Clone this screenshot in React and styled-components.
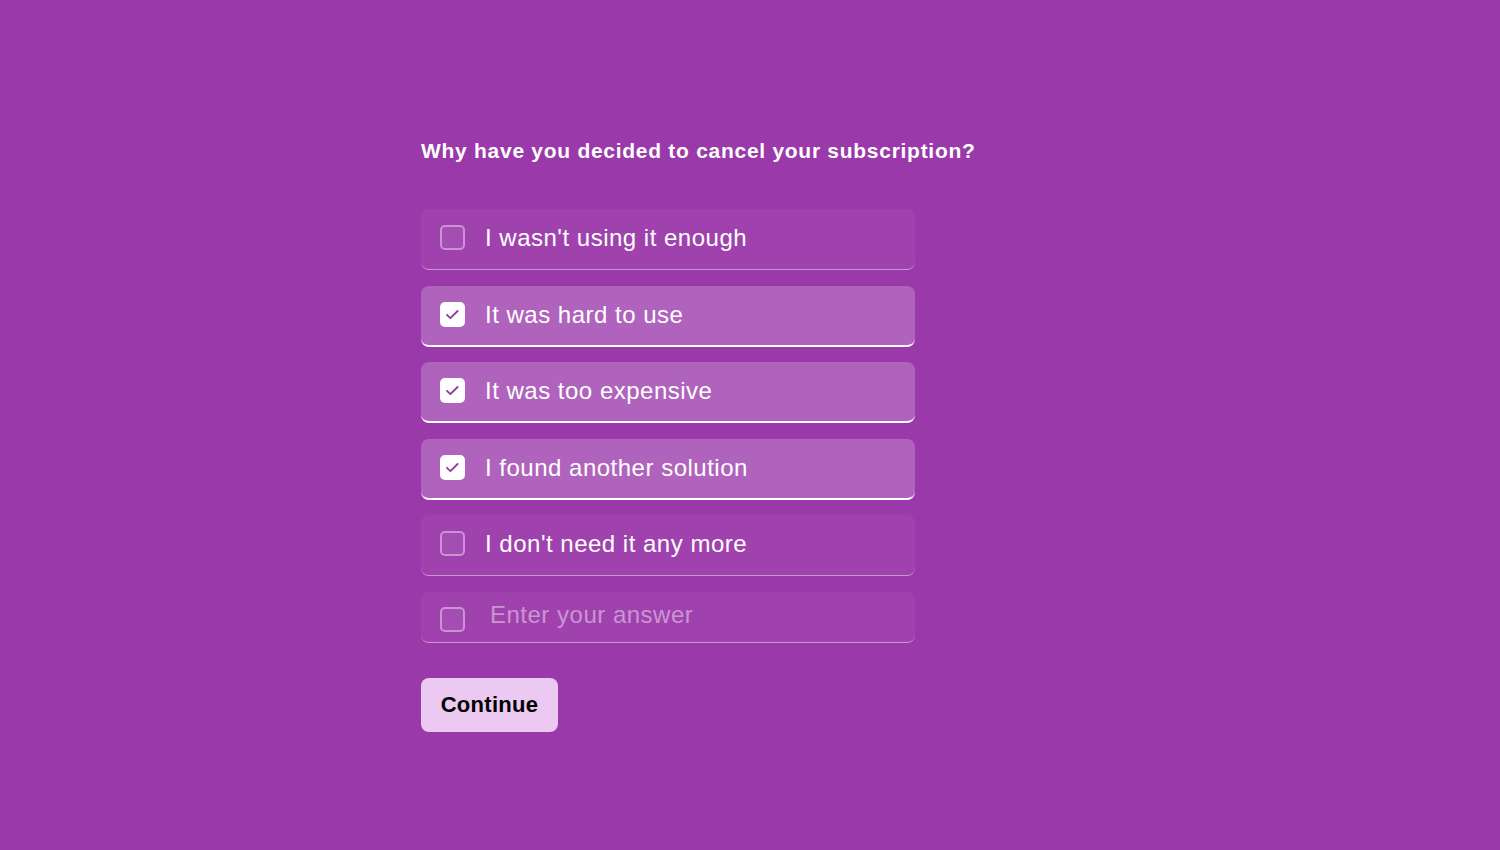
import { useState } from "react";
import styled, { createGlobalStyle } from "styled-components";

const GlobalStyle = createGlobalStyle`
  html, body {
    margin: 0;
    padding: 0;
    background: #9a39a9;
    font-family: "Liberation Sans", Arial, sans-serif;
  }
`;

const reasons = [
  "I wasn't using it enough",
  "It was hard to use",
  "It was too expensive",
  "I found another solution",
  "I don't need it any more",
];

const Page = () => {
  const [checked, setChecked] = useState([false, true, true, true, false]);
  const [other, setOther] = useState("");
  const [otherOn, setOtherOn] = useState(false);

  const toggle = (i) =>
    setChecked((prev) => prev.map((v, j) => (j === i ? !v : v)));

  return (
    <Wrap>
      <Form onSubmit={(e) => e.preventDefault()}>
        <Title>Why have you decided to cancel your subscription?</Title>
        <List>
          {reasons.map((r, i) => (
            <Option key={r} $on={checked[i]} onClick={() => toggle(i)}>
              <Box $on={checked[i]}>
                {checked[i] && (
                  <svg width="25" height="25" viewBox="0 0 25 25">
                    <path d="M7 12.8l3.4 3.4L17.6 9" fill="none" stroke="#9a39a9" strokeWidth="1.9" strokeLinecap="round" strokeLinejoin="round" />
                  </svg>
                )}
              </Box>
              <Label>{r}</Label>
            </Option>
          ))}
          <OtherRow>
            <Box $on={otherOn} $low onClick={() => setOtherOn(!otherOn)} />
            <OtherInput
              placeholder="Enter your answer"
              value={other}
              onChange={(e) => setOther(e.target.value)}
            />
          </OtherRow>
        </List>
        <Button>Continue</Button>
      </Form>
    </Wrap>
  );
};

export default function App() {
  return (
    <>
      <GlobalStyle />
      <Page />
    </>
  );
}

const Wrap = styled.div`
  min-height: 850px;
  padding: 137px 0 0 421px;
  box-sizing: border-box;
`;

const Form = styled.form`
  display: flex;
  flex-direction: column;
  align-items: flex-start;
`;

const Title = styled.h1`
  margin: 0;
  font-size: 21px;
  line-height: 28px;
  font-weight: 700;
  color: #fff;
  letter-spacing: 0.72px;
`;

const List = styled.div`
  display: flex;
  flex-direction: column;
  gap: 15.5px;
  margin-top: 44px;
  width: 494px;
`;

const Option = styled.div`
  display: flex;
  align-items: center;
  gap: 20px;
  height: 61px;
  box-sizing: border-box;
  padding: 0 20px 0 19px;
  border-radius: 8px;
  cursor: pointer;
  background: ${(p) => (p.$on ? "#b063bd" : "#9f42ae")};
  border-bottom: ${(p) => (p.$on ? "2px solid #ffffff" : "1px solid rgba(255,255,255,0.45)")};
  padding-top: ${(p) => (p.$on ? "1px" : "0")};
`;

const Box = styled.span`
  flex: none;
  width: 25px;
  height: 25px;
  box-sizing: border-box;
  border-radius: 5px;
  display: flex;
  align-items: center;
  justify-content: center;
  background: ${(p) => (p.$on ? "#ffffff" : "rgba(255,255,255,0.06)")};
  border: ${(p) => (p.$on ? "none" : "2px solid rgba(255,255,255,0.4)")};
  margin-top: ${(p) => (p.$low ? "6px" : "-3px")};
  cursor: pointer;
`;

const Label = styled.span`
  color: #fff;
  font-size: 24px;
  line-height: 28px;
  letter-spacing: 0.5px;
  margin-top: -2px;
`;

const OtherRow = styled.div`
  display: flex;
  align-items: center;
  gap: 25px;
  height: 51px;
  box-sizing: border-box;
  padding: 0 20px 0 19px;
  border-radius: 8px;
  background: #9f42ae;
  border-bottom: 1px solid rgba(255,255,255,0.45);
`;

const OtherInput = styled.input`
  flex: 1;
  border: none;
  outline: none;
  background: transparent;
  color: #fff;
  font-family: "Liberation Sans", Arial, sans-serif;
  font-size: 24px;
  letter-spacing: 0.5px;
  padding: 0;
  margin-top: -4px;
  &::placeholder {
    color: rgba(255, 255, 255, 0.45);
  }
`;

const Button = styled.button`
  margin-top: 35px;
  width: 137px;
  height: 54px;
  border: none;
  border-radius: 8px;
  background: #ecc9f0;
  color: #000;
  font-family: "Liberation Sans", Arial, sans-serif;
  font-weight: 700;
  font-size: 22px;
  letter-spacing: 0.3px;
  cursor: pointer;
`;
